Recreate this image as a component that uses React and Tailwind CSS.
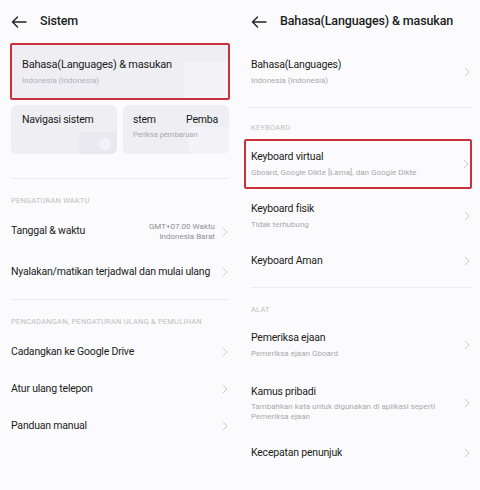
import React from 'react';

const font = { fontFamily: 'Roboto, "Noto Sans", sans-serif' };

const Chevron = () => (
    <svg width="6" height="10" viewBox="0 0 6 10" className="shrink-0">
        <polyline points="1,1 5,5 1,9" fill="none" stroke="#c9c9cc" strokeWidth="1" />
    </svg>
);

const BackArrow = () => (
    <svg width="16" height="12" viewBox="0 0 16 12" className="shrink-0">
        <path d="M15 6H1.5M6.5 1L1.5 6l5 5" fill="none" stroke="#222" strokeWidth="1.4" strokeLinecap="round" strokeLinejoin="round" />
    </svg>
);

const Header = ({ title }) => (
    <div className="h-[43px] flex items-center pl-[11px] gap-[13px]">
        <BackArrow />
        <span className="text-[12.5px] tracking-[-0.15px] font-medium text-[#1b1b1b]">{title}</span>
    </div>
);

const SectionLabel = ({ children, className = '' }) => (
    <div className={`h-[22px] flex items-center text-[7.5px] tracking-[0.2px] text-[#bdbdc2] ${className}`}>{children}</div>
);

const Divider = ({ className = '' }) => <div className={`h-px bg-[#ececef] ${className}`}></div>;

const main = 'text-[10.5px] tracking-[-0.2px] text-[#1b1b1b]';

const Row = ({ title, h }) => (
    <div className={`flex items-center justify-between pr-[1px] ${h}`}>
        <span className={main}>{title}</span>
        <Chevron />
    </div>
);

const SubRow = ({ title, sub, subLeading = 'leading-[12px]', className = '' }) => (
    <div className={`flex items-center justify-between pr-[2px] ${className}`}>
        <div>
            <p className={`${main} leading-[16px]`}>{title}</p>
            <p className={`mt-[2px] text-[8px] ${subLeading} text-[#a9a9ae] max-w-[190px]`}>{sub}</p>
        </div>
        <Chevron />
    </div>
);

const SystemPanel = () => (
    <div className="w-[240px] h-full">
        <Header title="Sistem" />

        {/* language card */}
        <div className="mx-[10px] relative h-[57px] rounded-[2px] border-2 border-[#c8323d] bg-[#eeeef3] overflow-hidden">
            <div className="absolute right-0 bottom-0 w-[44px] h-[36px] bg-[#f4f4f8] rounded-tl-[4px]"></div>
            <div className="relative pl-[10px] pt-[12px]">
                <p className="text-[11px] tracking-[-0.2px] leading-[16px] text-[#1b1b1b]">Bahasa(Languages) &amp; masukan</p>
                <p className="mt-[2px] text-[8px] leading-[12px] text-[#b1b1b6]">Indonesia (Indonesia)</p>
            </div>
        </div>

        {/* quick cards */}
        <div className="mx-[11px] mt-[5px] grid grid-cols-2 gap-[6px]">
            <div className="relative h-[49px] rounded-[6px] bg-[#eeeef3] overflow-hidden">
                <div className="absolute right-0 bottom-0 w-[38px] h-[22px] bg-[#e8e8ee] rounded-tl-[4px]"></div>
                <div className="absolute right-[6px] bottom-[4px] w-[12px] h-[12px] rounded-full bg-[#f2f2f6]"></div>
                <p className={`relative pl-[11px] pt-[7px] leading-[16px] ${main}`}>Navigasi sistem</p>
            </div>
            <div className="relative h-[49px] rounded-[6px] bg-[#eeeef3] overflow-hidden">
                <div className="absolute right-0 bottom-0 w-[40px] h-[27px] bg-[#f4f4f8] rounded-tl-[4px]"></div>
                <div className="relative pl-[10px] pt-[7px]">
                    <p className={`flex justify-between pr-[11px] leading-[16px] ${main}`}>
                        <span>stem</span>
                        <span>Pemba</span>
                    </p>
                    <p className="mt-[2px] text-[7.5px] leading-[10px] text-[#a9a9ae]">Periksa pembaruan</p>
                </div>
            </div>
        </div>

        <div className="ml-[11px] mr-[11px]">
            <Divider className="mt-[24px]" />
            <SectionLabel className="mt-[11px]">PENGATURAN WAKTU</SectionLabel>
            <div className="h-[40px] flex items-center justify-between pr-[1px]">
                <span className={`${main} -mt-[3px]`}>Tanggal &amp; waktu</span>
                <div className="flex items-center gap-[7px]">
                    <div className="text-right text-[8px] leading-[10px] text-[#8f8f94]">
                        <p>GMT+07.00 Waktu</p>
                        <p>Indonesia Barat</p>
                    </div>
                    <Chevron />
                </div>
            </div>
            <Row title="Nyalakan/matikan terjadwal dan mulai ulang" h="h-[40px]" />
            <Divider className="mt-[7px]" />
            <SectionLabel className="mt-[11px]">PENCADANGAN, PENGATURAN ULANG &amp; PEMULIHAN</SectionLabel>
            <Row title="Cadangkan ke Google Drive" h="h-[37px]" />
            <Row title="Atur ulang telepon" h="h-[37px]" />
            <Row title="Panduan manual" h="h-[37px]" />
        </div>
    </div>
);

const LanguagePanel = () => (
    <div className="w-[240px] h-full">
        <Header title="Bahasa(Languages) & masukan" />

        <SubRow
            title="Bahasa(Languages)"
            sub="Indonesia (Indonesia)"
            className="ml-[11px] mr-[8px] pt-[14px] pb-[14px]"
        />
        <Divider className="ml-[8px] mr-[8px] mt-[6px]" />
        <SectionLabel className="ml-[11px] mt-[9px]">KEYBOARD</SectionLabel>

        {/* highlighted */}
        <div className="ml-[4px] mr-[8px] h-[50px] border-2 border-[#c8323d] rounded-[2px] pl-[5px] pr-[1px] flex items-center justify-between">
            <div>
                <p className={`${main} leading-[16px]`}>Keyboard virtual</p>
                <p className="mt-[2px] text-[8px] leading-[12px] text-[#a9a9ae]">Gboard, Google Dikte [Lama], dan Google Dikte</p>
            </div>
            <Chevron />
        </div>

        <SubRow title="Keyboard fisik" sub="Tidak terhubung" className="ml-[11px] mr-[8px] pt-[12px] pb-[12px]" />
        <div className="ml-[11px] mr-[8px] h-[36px] flex items-center justify-between pr-[2px]">
            <span className={main}>Keyboard Aman</span>
            <Chevron />
        </div>
        <Divider className="ml-[11px] mr-[8px] mt-[8px]" />
        <SectionLabel className="ml-[11px] mt-[11px]">ALAT</SectionLabel>

        <SubRow title="Pemeriksa ejaan" sub="Pemeriksa ejaan Gboard" className="ml-[11px] mr-[8px] pt-[9px] pb-[13px]" />
        <SubRow
            title="Kamus pribadi"
            sub="Tambahkan kata untuk digunakan di aplikasi seperti Pemeriksa ejaan"
            subLeading="leading-[10px]"
            className="ml-[11px] mr-[8px] pt-[11px] pb-[12px]"
        />
        <div className="ml-[11px] mr-[8px] h-[38px] flex items-center justify-between pr-[2px]">
            <span className={main}>Kecepatan penunjuk</span>
            <Chevron />
        </div>
    </div>
);

export default function App() {
    return (
        <div className="w-[480px] h-[490px] flex bg-[#fbfbfd] overflow-hidden" style={font}>
            <SystemPanel />
            <LanguagePanel />
        </div>
    );
}
